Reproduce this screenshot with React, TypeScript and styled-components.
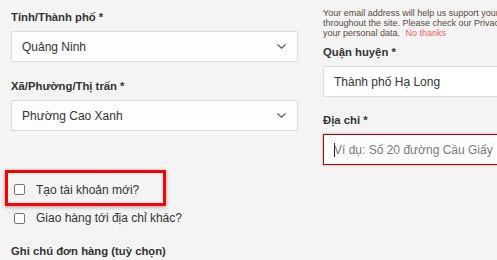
import styled, { createGlobalStyle } from 'styled-components';

const GlobalStyle = createGlobalStyle`
    html, body {
        margin: 0;
        padding: 0;
        background: #f4f4f4;
        font-family: "Liberation Sans", Arial, sans-serif;
        color: #333;
    }
`;

function Chevron() {
    return (
        <svg width="9" height="5" viewBox="0 0 9 5">
            <path d="M0.5 0.5 L4.5 4.2 L8.5 0.5" fill="none" stroke="#555" strokeWidth="1.1" />
        </svg>
    );
}

export default function App() {
    return (
        <>
            <GlobalStyle />
            <Page>
                <LeftColumn>
                    <Label>Tỉnh/Thành phố *</Label>
                    <Select>
                        <span>Quảng Ninh</span>
                        <Chevron />
                    </Select>
                    <Label>Xã/Phường/Thị trấn *</Label>
                    <Select>
                        <span>Phường Cao Xanh</span>
                        <Chevron />
                    </Select>
                    <Highlight>
                        <CheckRow>
                            <CheckBox type="checkbox" />
                            <CheckText>Tạo tài khoản mới?</CheckText>
                        </CheckRow>
                    </Highlight>
                    <CheckRow>
                        <CheckBox type="checkbox" />
                        <CheckText>Giao hàng tới địa chỉ khác?</CheckText>
                    </CheckRow>
                    <NoteLabel>Ghi chú đơn hàng (tuỳ chọn)</NoteLabel>
                </LeftColumn>
                <RightColumn>
                    <Notice>
                        <NoticeLine>Your email address will help us support your shopping experience</NoticeLine>
                        <NoticeLine>throughout the site. Please check our Privacy Policy to see how we use</NoticeLine>
                        <NoticeLine>
                            your personal data. <NoThanks>No thanks</NoThanks>
                        </NoticeLine>
                    </Notice>
                    <Label>Quận huyện *</Label>
                    <TextField>Thành phố Hạ Long</TextField>
                    <Label>Địa chỉ *</Label>
                    <AddressField>
                        <Caret />
                        <Placeholder>Ví dụ: Số 20 đường Cầu Giấy</Placeholder>
                    </AddressField>
                </RightColumn>
            </Page>
        </>
    );
}

const Page = styled.div`
    display: flex;
    width: 497px;
    height: 260px;
    overflow: hidden;
`;

const LeftColumn = styled.div`
    width: 287px;
    flex-shrink: 0;
    padding: 10px 0 0 11px;
    display: flex;
    flex-direction: column;

    & > * {
        flex-shrink: 0;
    }
`;

const RightColumn = styled.div`
    width: 220px;
    flex-shrink: 0;
    margin-left: 25px;
    padding-top: 8px;
    display: flex;
    flex-direction: column;

    & > * {
        flex-shrink: 0;
    }
`;

const Label = styled.div`
    font-size: 11.3px;
    font-weight: bold;
    line-height: 15px;
    color: #333;
    margin-bottom: 6px;
    white-space: nowrap;
`;

const Select = styled.div`
    box-sizing: border-box;
    height: 31px;
    border: 1px solid #dcdcdc;
    background: #fdfdfd;
    display: flex;
    align-items: center;
    justify-content: space-between;
    padding: 0 11px 0 10px;
    font-size: 12px;
    color: #333;
    margin-bottom: 17px;
`;

const Highlight = styled.div`
    margin: 22px 0 0 -6px;
    width: 161px;
    height: 36px;
    box-sizing: border-box;
    border: 3px solid #f00;
    box-shadow: 0 1px 4px rgba(0, 0, 0, 0.35);
    display: flex;
    align-items: center;
    padding: 3px 0 0 3px;
`;

const CheckRow = styled.div`
    display: flex;
    align-items: center;
    height: 16px;
    margin-top: 4px;

    ${Highlight} & {
        margin-top: 0;
    }
`;

const CheckBox = styled.input`
    appearance: none;
    box-sizing: border-box;
    width: 11px;
    height: 11px;
    margin: 0 0 0 3px;
    border: 1px solid #767676;
    border-radius: 2px;
    background: #fff;
`;

const CheckText = styled.span`
    font-size: 12px;
    color: #333;
    margin-left: 11px;
    white-space: nowrap;
`;

const NoteLabel = styled(Label)`
    margin-top: 18px;
`;

const Notice = styled.div`
    font-size: 9px;
    line-height: 10px;
    color: #5a4a3c;
    margin-bottom: 7px;
`;

const NoticeLine = styled.div`
    white-space: nowrap;
`;

const NoThanks = styled.span`
    color: #ff5a5a;
    margin-left: 3px;
`;

const TextField = styled.div`
    box-sizing: border-box;
    height: 31px;
    width: 200px;
    border: 1px solid #dcdcdc;
    background: #fff;
    display: flex;
    align-items: center;
    padding-left: 10px;
    font-size: 12px;
    color: #333;
    margin-bottom: 16px;
    white-space: nowrap;
`;

const AddressField = styled(TextField)`
    border: 1px solid #b80000;
    box-shadow: 0 0 2px rgba(150, 0, 0, 0.4);
    margin-bottom: 0;
`;

const Caret = styled.span`
    width: 1px;
    height: 14px;
    background: #222;
`;

const Placeholder = styled.span`
    color: #777;
    margin-left: -1px;
`;
